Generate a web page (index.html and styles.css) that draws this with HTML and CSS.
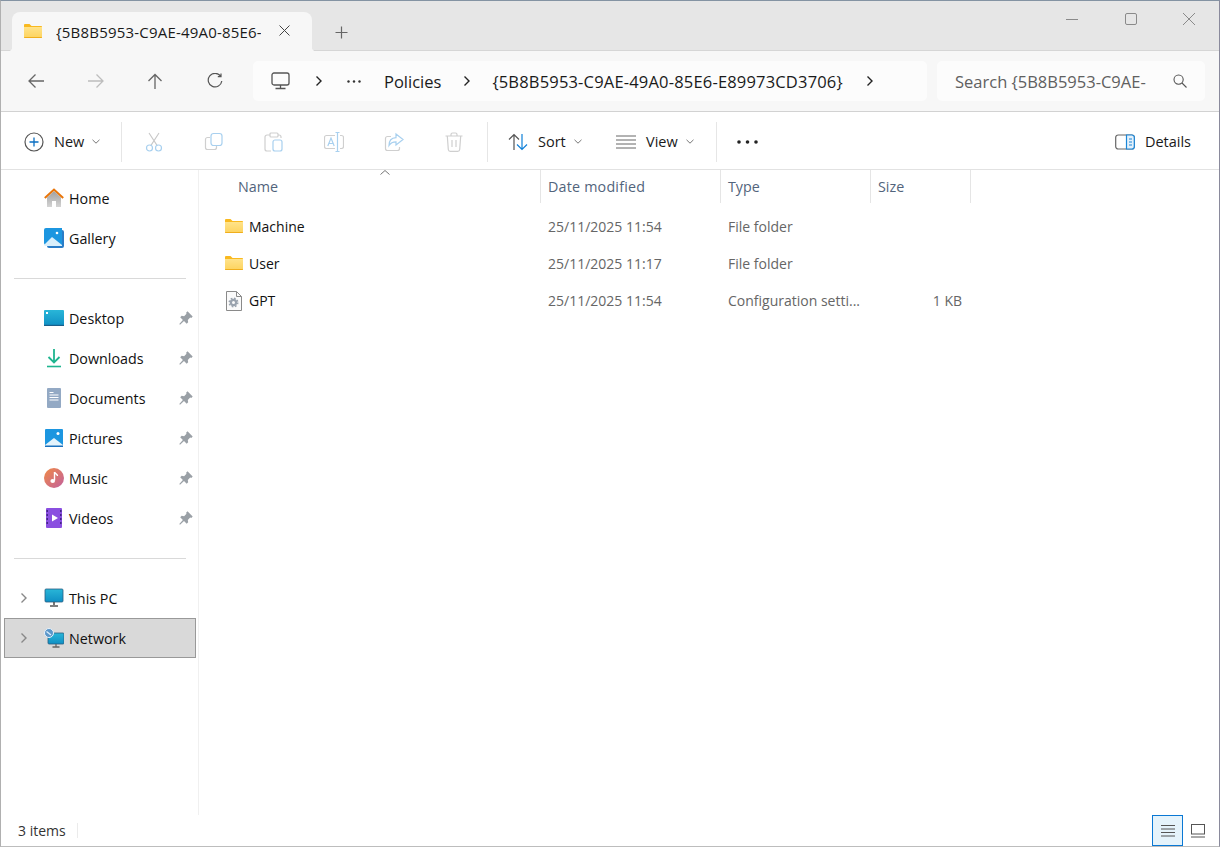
FILE: index.html
```html
<!DOCTYPE html>
<html lang="en">

<head>
    <meta charset="UTF-8">
    <title>File Explorer</title>
    <link rel="stylesheet" href="styles.css">
</head>

<body>
    <svg class="defs" width="0" height="0">
        <defs>
            <linearGradient id="folderFill" x1="0" y1="0" x2="0" y2="1">
                <stop offset="0" stop-color="#ffe38a" />
                <stop offset="1" stop-color="#fdd35e" />
            </linearGradient>
            <linearGradient id="skyFill" x1="0" y1="0" x2="0" y2="1">
                <stop offset="0" stop-color="#29b6d8" />
                <stop offset="1" stop-color="#0f8fc4" />
            </linearGradient>
            <linearGradient id="houseFill" x1="0" y1="0" x2="0" y2="1">
                <stop offset="0" stop-color="#a0a0a0" />
                <stop offset="1" stop-color="#d4d4d4" />
            </linearGradient>
            <linearGradient id="musicFill" x1="0" y1="0" x2="1" y2="1">
                <stop offset="0" stop-color="#f08a45" />
                <stop offset="1" stop-color="#c2609e" />
            </linearGradient>
            <symbol id="folder" viewBox="0 0 18 14">
                <path d="M0 1.2C0 .5.5 0 1.2 0h4.3l2 2H17c.6 0 1 .4 1 1v1H0z" fill="#f9b91f" />
                <path d="M0 3h18v10c0 .6-.4 1-1 1H1c-.6 0-1-.4-1-1z" fill="url(#folderFill)" />
                <path d="M0 13h18v.2c0 .5-.3.8-.8.8H.8c-.5 0-.8-.3-.8-.8z" fill="#f0ae1c" />
            </symbol>
            <symbol id="pin" viewBox="0 0 14 14">
                <path d="M8.500.3L13.700 5.500 12.300 6.900 11.200 6.500 8.800 8.900 9.200 11.300 7.700 12.800 5 10.100 1 13.700.3 13 3.900 9 1.200 6.300 2.700 4.800 5.100 5.200 7.500 2.800 7.100 1.700z" fill="#9aa0a6" />
            </symbol>
            <symbol id="chev" viewBox="0 0 8 12">
                <path d="M1.500 1.500L6 6l-4.500 4.500" fill="none" stroke="currentColor" stroke-width="1.400" />
            </symbol>
            <symbol id="caret" viewBox="0 0 8 5">
                <path d="M.5.8L4 4.200 7.500.8" fill="none" stroke="#777" stroke-width="1" />
            </symbol>
        </defs>
    </svg>

    <div class="window">
        <!-- tabs -->
        <div class="tabbar">
            <div class="tab">
                <svg class="tab-folder" width="18" height="14"><use href="#folder" /></svg>
                <span class="tab-title">{5B8B5953-C9AE-49A0-85E6-E</span>
                <svg class="tab-close" width="11" height="11" viewBox="0 0 11 11"><path d="M.5.5l10 10M10.500.5l-10 10" stroke="#444" stroke-width="1" /></svg>
            </div>
            <svg class="tab-add" width="13" height="13" viewBox="0 0 13 13"><path d="M6.500.5v12M.5 6.500h12" stroke="#666" stroke-width="1.200" /></svg>
            <div class="win-controls">
                <svg width="12" height="12" viewBox="0 0 12 12"><path d="M0 6.500h12" stroke="#8a8a8a" stroke-width="1" /></svg>
                <svg width="12" height="12" viewBox="0 0 12 12"><rect x=".5" y=".5" width="11" height="11" rx="1.500" fill="none" stroke="#8a8a8a" /></svg>
                <svg width="12" height="12" viewBox="0 0 12 12"><path d="M0 0l12 12M12 0L0 12" stroke="#8a8a8a" stroke-width="1" /></svg>
            </div>
        </div>

        <!-- address bar -->
        <div class="addressbar">
            <div class="nav-btns">
                <svg width="18" height="16" viewBox="0 0 18 16"><path d="M17 8H2M8.500 1.500L2 8l6.500 6.500" fill="none" stroke="#666" stroke-width="1.300" /></svg>
                <svg width="18" height="16" viewBox="0 0 18 16"><path d="M1 8h15M9.500 1.500L16 8l-6.500 6.500" fill="none" stroke="#bdbdbd" stroke-width="1.300" /></svg>
                <svg width="18" height="16" viewBox="0 0 18 16"><path d="M9 16V1.500M2.500 8L9 1.500 15.500 8" fill="none" stroke="#666" stroke-width="1.300" /></svg>
                <svg width="18" height="16" viewBox="0 0 18 16"><path d="M14.600 3.200A6.800 6.800 0 1 0 15.800 8M15 .5v3.200h-3.200" fill="none" stroke="#555" stroke-width="1.200" /></svg>
            </div>
            <div class="crumbs">
                <svg class="crumb-pc" width="19" height="18" viewBox="0 0 19 18"><rect x="1" y="1" width="17" height="12" rx="2" fill="none" stroke="#555" stroke-width="1.300" /><path d="M9.500 13v3M4.500 16.500h10" stroke="#555" stroke-width="1.300" /></svg>
                <svg class="crumb-chev first" width="8" height="12"><use href="#chev" /></svg>
                <svg class="crumb-dots" width="14" height="3" viewBox="0 0 14 3"><circle cx="1.500" cy="1.500" r="1.200" fill="#333" /><circle cx="7" cy="1.500" r="1.200" fill="#333" /><circle cx="12.500" cy="1.500" r="1.200" fill="#333" /></svg>
                <span class="crumb-text policies">Policies</span>
                <svg class="crumb-chev" width="8" height="12"><use href="#chev" /></svg>
                <span class="crumb-text guid">{5B8B5953-C9AE-49A0-85E6-E89973CD3706}</span>
                <svg class="crumb-chev last" width="8" height="12"><use href="#chev" /></svg>
            </div>
            <div class="search">
                <span class="search-text">Search {5B8B5953-C9AE-</span>
                <svg width="14" height="14" viewBox="0 0 14 14"><circle cx="5.600" cy="5.600" r="4.600" fill="none" stroke="#555" stroke-width="1.100" /><path d="M9 9l4.500 4.500" stroke="#555" stroke-width="1.100" /></svg>
            </div>
        </div>

        <!-- command bar -->
        <div class="commandbar">
            <div class="cmd cmd-new">
                <svg width="20" height="20" viewBox="0 0 20 20"><circle cx="10" cy="10" r="9" fill="none" stroke="#555" stroke-width="1.200" /><path d="M10 5.500v9M5.500 10h9" stroke="#0a6fc2" stroke-width="1.300" /></svg>
                <span>New</span>
                <svg class="caret" width="8" height="5"><use href="#caret" /></svg>
            </div>
            <div class="cmd-sep"></div>
            <div class="cmd-icons">
                <div class="cmd-icon"><svg width="20" height="20" viewBox="0 0 20 20"><path d="M5 1l8.200 12.600M15 1L6.800 13.600" fill="none" stroke="#c8c8c8" stroke-width="1.100" /><circle cx="5.500" cy="16" r="3" fill="none" stroke="#a8d0ef" stroke-width="1.200" /><circle cx="14.500" cy="16" r="3" fill="none" stroke="#a8d0ef" stroke-width="1.200" /></svg></div>
                <div class="cmd-icon"><svg width="20" height="20" viewBox="0 0 20 20"><path d="M6 5.500H3.500A2 2 0 0 0 1.500 7.500v8a2 2 0 0 0 2 2h7a2 2 0 0 0 2-2V14" fill="none" stroke="#cfcfcf" stroke-width="1.200" /><rect x="7" y="1.500" width="11" height="12" rx="2.500" fill="none" stroke="#a8d0ef" stroke-width="1.200" /></svg></div>
                <div class="cmd-icon"><svg width="20" height="20" viewBox="0 0 20 20"><path d="M6 3H3a2 2 0 0 0-2 2v12a2 2 0 0 0 2 2h4M14 3h1a2 2 0 0 1 2 2v1" fill="none" stroke="#cfcfcf" stroke-width="1.200" /><rect x="6" y="1" width="8" height="4" rx="1" fill="none" stroke="#cfcfcf" stroke-width="1.200" /><rect x="9" y="8" width="9" height="11" rx="2" fill="none" stroke="#a8d0ef" stroke-width="1.200" /></svg></div>
                <div class="cmd-icon wide"><svg width="20" height="20" viewBox="0 0 20 20"><path d="M11 3.500H2.500a2 2 0 0 0-2 2v9a2 2 0 0 0 2 2H11M16 3.500h1.500a2 2 0 0 1 2 2v9a2 2 0 0 1-2 2H16" fill="none" stroke="#cfcfcf" stroke-width="1.200" /><path d="M13.500.5v19M11.500.5h4M11.500 19.500h4M3.800 14L7 6l3.200 8M5 11.500h4" fill="none" stroke="#a8d0ef" stroke-width="1.200" /></svg></div>
                <div class="cmd-icon"><svg width="20" height="20" viewBox="0 0 20 20"><path d="M7 4.500H3.500a2 2 0 0 0-2 2v10a2 2 0 0 0 2 2h10a2 2 0 0 0 2-2V15" fill="none" stroke="#cfcfcf" stroke-width="1.200" /><path d="M12 2l7 5.500-7 5.500V9.800c-3.500 0-5.500 1.200-7 3.700 0-5 2.500-7.500 7-7.800z" fill="none" stroke="#a8d0ef" stroke-width="1.200" /></svg></div>
                <div class="cmd-icon"><svg width="20" height="20" viewBox="0 0 20 20"><path d="M1.500 4h17M7 4V2.500A1.500 1.500 0 0 1 8.500 1h3A1.500 1.500 0 0 1 13 2.500V4M3.300 4l1 13.500a2 2 0 0 0 2 1.800h7.400a2 2 0 0 0 2-1.800l1-13.500M8 8v7M12 8v7" fill="none" stroke="#cfcfcf" stroke-width="1.200" /></svg></div>
            </div>
            <div class="cmd-sep after-icons"></div>
            <div class="cmd cmd-sort">
                <svg width="20" height="18" viewBox="0 0 20 18"><path d="M6 17V1.500M1 6.500l5-5 5 5" fill="none" stroke="#555" stroke-width="1.200" /><path d="M14 1v15.500M9 11.500l5 5 5-5" fill="none" stroke="#1080d8" stroke-width="1.200" /></svg>
                <span>Sort</span>
                <svg class="caret" width="8" height="5"><use href="#caret" /></svg>
            </div>
            <div class="cmd cmd-view">
                <svg width="20" height="14" viewBox="0 0 20 14"><path d="M0 1h20M0 5h20M0 9h20M0 13h20" stroke="#666" stroke-width="1" /></svg>
                <span>View</span>
                <svg class="caret" width="8" height="5"><use href="#caret" /></svg>
            </div>
            <div class="cmd-sep"></div>
            <svg class="cmd-more" width="21" height="4" viewBox="0 0 21 4"><circle cx="2" cy="2" r="1.800" fill="#222" /><circle cx="10.500" cy="2" r="1.800" fill="#222" /><circle cx="19" cy="2" r="1.800" fill="#222" /></svg>
            <div class="cmd cmd-details">
                <svg width="20" height="16" viewBox="0 0 20 16"><rect x=".7" y="1" width="18.600" height="14" rx="2.500" fill="none" stroke="#666" stroke-width="1.200" /><path d="M11.500 1h5.300a2.500 2.500 0 0 1 2.500 2.500v9a2.500 2.500 0 0 1-2.500 2.500h-5.300z" fill="#e4f1fb" stroke="#1a86d8" stroke-width="1.200" /><path d="M14 5h3M14 8h3M14 11h3" stroke="#1a86d8" stroke-width="1.200" /></svg>
                <span>Details</span>
            </div>
        </div>

        <div class="main">
            <!-- left navigation -->
            <div class="sidebar">
                <ul class="nav-list">
                    <li class="nav-item">
                        <span class="chev-slot"></span>
                        <svg class="nav-icon" width="20" height="20" viewBox="0 0 20 20"><path d="M3 9.500L10 3l7 6.500V19h-5v-6H8v6H3z" fill="url(#houseFill)" /><path d="M.8 10L10 1.500 19.200 10" fill="none" stroke="#e8750a" stroke-width="2" /></svg>
                        <span class="nav-label">Home</span>
                    </li>
                    <li class="nav-item">
                        <span class="chev-slot"></span>
                        <svg class="nav-icon" width="20" height="20" viewBox="0 0 20 20"><rect x="3" y="2" width="17" height="18" rx="2" fill="#2a7cc7" /><path d="M0 2a2 2 0 0 1 2-2h16v17H2a2 2 0 0 1-2-2z" fill="#1c96e0" /><path d="M0 17l8-8 10 8v1H2a2 2 0 0 1-2-1z" fill="#d9effb" /><circle cx="13" cy="5" r="1.300" fill="#fff" /></svg>
                        <span class="nav-label">Gallery</span>
                    </li>
                </ul>
                <div class="nav-sep"></div>
                <ul class="nav-list">
                    <li class="nav-item">
                        <span class="chev-slot"></span>
                        <svg class="nav-icon" width="20" height="16" viewBox="0 0 20 16"><rect width="20" height="16" rx="1" fill="url(#skyFill)" /><rect x="2" y="2" width="2" height="2" fill="#fff" /><rect y="14.800" width="20" height="1.200" fill="#1b5f8a" /></svg>
                        <span class="nav-label">Desktop</span>
                        <svg class="pin" width="14" height="14"><use href="#pin" /></svg>
                    </li>
                    <li class="nav-item">
                        <span class="chev-slot"></span>
                        <svg class="nav-icon" width="20" height="20" viewBox="0 0 20 20"><path d="M10 1v13M4.500 9l5.500 5.500L15.500 9" fill="none" stroke="#1fb58f" stroke-width="1.800" /><path d="M3 18.500h14" stroke="#1fb58f" stroke-width="1.600" /></svg>
                        <span class="nav-label">Downloads</span>
                        <svg class="pin" width="14" height="14"><use href="#pin" /></svg>
                    </li>
                    <li class="nav-item">
                        <span class="chev-slot"></span>
                        <svg class="nav-icon" width="20" height="20" viewBox="0 0 20 20"><rect x="3" width="14" height="20" rx="1" fill="#93a9c4" /><path d="M5.500 4.500h4M5.500 7h9M5.500 9.500h9M5.500 12h9" stroke="#fff" stroke-width="1.100" /></svg>
                        <span class="nav-label">Documents</span>
                        <svg class="pin" width="14" height="14"><use href="#pin" /></svg>
                    </li>
                    <li class="nav-item">
                        <span class="chev-slot"></span>
                        <svg class="nav-icon" width="20" height="20" viewBox="0 0 20 20"><rect x="1" y="1" width="18" height="18" rx="1" fill="#1c96e0" /><path d="M1 17l9-7 9 7v1a1 1 0 0 1-1 1H2a1 1 0 0 1-1-1z" fill="#e3f3fc" /><path d="M1 19h18v-1.500H1z" fill="#1a70bd" /><circle cx="14" cy="5.500" r="1.500" fill="#fff" /></svg>
                        <span class="nav-label">Pictures</span>
                        <svg class="pin" width="14" height="14"><use href="#pin" /></svg>
                    </li>
                    <li class="nav-item">
                        <span class="chev-slot"></span>
                        <svg class="nav-icon" width="20" height="20" viewBox="0 0 20 20"><circle cx="10" cy="10" r="10" fill="url(#musicFill)" /><path d="M10.500 4v8.500" stroke="#fff" stroke-width="1.400" /><ellipse cx="8.700" cy="13" rx="2.300" ry="1.900" fill="#fff" /><path d="M10.500 4c.5 2 3 2 3 4" fill="none" stroke="#fff" stroke-width="1.400" /></svg>
                        <span class="nav-label">Music</span>
                        <svg class="pin" width="14" height="14"><use href="#pin" /></svg>
                    </li>
                    <li class="nav-item">
                        <span class="chev-slot"></span>
                        <svg class="nav-icon" width="20" height="20" viewBox="0 0 20 20"><rect x="2" width="16" height="20" rx="1" fill="#8a4fe0" /><path d="M8 6.500l6 3.500-6 3.500z" fill="#fff" /><path d="M3.200 2v16M16.800 2v16" stroke="#3c2080" stroke-width="1.400" stroke-dasharray="2 2" /></svg>
                        <span class="nav-label">Videos</span>
                        <svg class="pin" width="14" height="14"><use href="#pin" /></svg>
                    </li>
                </ul>
                <div class="nav-sep"></div>
                <ul class="nav-list">
                    <li class="nav-item">
                        <span class="chev-slot"><svg width="8" height="12"><use href="#chev" /></svg></span>
                        <svg class="nav-icon" width="20" height="20" viewBox="0 0 20 20"><rect x="1" y="1" width="18" height="13" rx="1" fill="url(#skyFill)" stroke="#2a5d80" stroke-width=".8" /><path d="M10 14v3M6 18h8" stroke="#555" stroke-width="1.600" /></svg>
                        <span class="nav-label">This PC</span>
                    </li>
                    <li class="nav-item selected">
                        <span class="chev-slot"><svg width="8" height="12"><use href="#chev" /></svg></span>
                        <svg class="nav-icon" width="20" height="20" viewBox="0 0 20 20"><rect x="4" y="5" width="16" height="11" rx="1" fill="url(#skyFill)" stroke="#2a5d80" stroke-width=".8" /><path d="M12 16v2.500M8.500 19h7" stroke="#666" stroke-width="1.300" /><circle cx="5" cy="5" r="4.500" fill="#5b96c9" stroke="#e8f2fa" stroke-width="1" /><path d="M2.500 3.500L7 7" stroke="#d8ecfa" stroke-width="1.500" /></svg>
                        <span class="nav-label">Network</span>
                    </li>
                </ul>
            </div>

            <!-- file list -->
            <div class="files">
                <svg class="sort-arrow" width="10" height="5" viewBox="0 0 10 5"><path d="M.5 4.500L5 .5l4.500 4" fill="none" stroke="#777" /></svg>
                <div class="file-head">
                    <div class="col-name head-cell">Name</div>
                    <div class="col-date head-cell">Date modified</div>
                    <div class="col-type head-cell">Type</div>
                    <div class="col-size head-cell">Size</div>
                </div>
                <div class="file-row">
                    <div class="col-name file-name">
                        <svg class="row-folder" width="18" height="14"><use href="#folder" /></svg>
                        <span>Machine</span>
                    </div>
                    <div class="col-date">25/11/2025 11:54</div>
                    <div class="col-type">File folder</div>
                    <div class="col-size"></div>
                </div>
                <div class="file-row">
                    <div class="col-name file-name">
                        <svg class="row-folder" width="18" height="14"><use href="#folder" /></svg>
                        <span>User</span>
                    </div>
                    <div class="col-date">25/11/2025 11:17</div>
                    <div class="col-type">File folder</div>
                    <div class="col-size"></div>
                </div>
                <div class="file-row">
                    <div class="col-name file-name">
                        <svg width="18" height="20" viewBox="0 0 18 20"><path d="M1.500.5h10l5 5v14h-15z" fill="#fafafa" stroke="#8a8a8a" /><path d="M11.500.5v5h5" fill="none" stroke="#8a8a8a" /><circle cx="8.500" cy="11.500" r="2.600" fill="none" stroke="#9aa3ae" stroke-width="2.200" /><circle cx="8.500" cy="11.500" r="4.300" fill="none" stroke="#9aa3ae" stroke-width="1.400" stroke-dasharray="1.700 1.680" /></svg>
                        <span>GPT</span>
                    </div>
                    <div class="col-date">25/11/2025 11:54</div>
                    <div class="col-type">Configuration setti...</div>
                    <div class="col-size">1 KB</div>
                </div>
            </div>
        </div>

        <!-- status bar -->
        <div class="statusbar">
            <span class="status-text">3 items</span>
            <div class="status-sep"></div>
            <div class="view-btn active">
                <svg width="14" height="12" viewBox="0 0 14 12"><path d="M0 .5h14M0 4h14M0 7.500h14M0 11h14" stroke="#555" stroke-width="1" /></svg>
            </div>
            <div class="view-btn preview">
                <svg width="14" height="14" viewBox="0 0 14 14"><rect x=".5" y=".5" width="13" height="9.500" fill="none" stroke="#555" /><path d="M0 13h14" stroke="#555" /></svg>
            </div>
        </div>
    </div>
</body>

</html>
```

FILE: styles.css
```css
* {
    margin: 0;
    padding: 0;
    box-sizing: border-box;
}

li {
    list-style: none;
}

svg {
    display: block;
    flex-shrink: 0;
}

.defs {
    position: absolute;
}

html,
body {
    width: 1220px;
    height: 847px;
    overflow: hidden;
}

body {
    font-family: "Open Sans", "Noto Sans", "Liberation Sans", sans-serif;
    font-size: 14px;
    color: #1a1a1a;
    background: #fff;
}

.window {
    width: 1220px;
    height: 847px;
    display: flex;
    flex-direction: column;
    border-top: 1px solid #8493a3;
    border-left: 1px solid #b0b0b0;
    border-right: 1px solid #8a8a9c;
    border-bottom: 1px solid #bdbdbd;
}

/* tabs */
.tabbar {
    height: 50px;
    flex-shrink: 0;
    display: flex;
    align-items: flex-start;
    background: #e6e6e6;
    border-bottom: 1px solid #d6d6d6;
    padding-left: 11px;
}

.tab {
    width: 300px;
    height: 39px;
    margin-top: 11px;
    display: flex;
    align-items: center;
    background: #f7f7f7;
    border-radius: 8px 8px 0 0;
    padding: 0 22px 0 12px;
    position: relative;
}

.tab::before,
.tab::after {
    content: "";
    position: absolute;
    bottom: 0;
    width: 4px;
    height: 4px;
}

.tab::before {
    left: -4px;
    background: radial-gradient(circle at 0 0, transparent 4px, #f7f7f7 4.5px);
}

.tab::after {
    right: -4px;
    background: radial-gradient(circle at 100% 0, transparent 4px, #f7f7f7 4.5px);
}

.tab-folder {
    margin-top: -2px;
}

.tab-title {
    width: 206px;
    margin-left: 14px;
    overflow: hidden;
    white-space: nowrap;
    font-size: 15px;
    color: #1a1a1a;
    letter-spacing: 0.2px;
}

.tab-close {
    margin-left: 18px;
    margin-top: -2px;
}

.tab-add {
    margin: 25px 0 0 23px;
}

.win-controls {
    margin-left: auto;
    margin-top: 12px;
    width: 153px;
    padding-right: 24px;
    display: flex;
    justify-content: space-between;
}

/* address bar */
.addressbar {
    height: 61px;
    flex-shrink: 0;
    display: flex;
    align-items: center;
    background: #f7f7f7;
    border-bottom: 1px solid #d2d2d2;
    padding-right: 14px;
}

.nav-btns {
    width: 252px;
    padding: 0 29px 0 26px;
    display: flex;
    justify-content: space-between;
}

.crumbs {
    width: 674px;
    height: 40px;
    display: flex;
    align-items: center;
    background: #fcfcfc;
    border-radius: 5px;
    padding-left: 18px;
    color: #222;
}

.crumb-chev.first {
    margin-left: 25px;
}

.crumb-dots {
    margin-left: 24px;
}

.crumb-text {
    font-size: 16.5px;
    color: #1a1a1a;
    white-space: nowrap;
}

.policies {
    margin-left: 23px;
    margin-right: 22px;
}

.guid {
    margin-left: 21px;
    width: 350px;
    letter-spacing: 0.18px;
}

.crumb-chev.last {
    margin-left: 24px;
}

.search {
    width: 268px;
    height: 40px;
    margin-left: 10px;
    display: flex;
    align-items: center;
    background: #fcfcfc;
    border-radius: 5px;
    padding-left: 18px;
}

.search-text {
    width: 192px;
    white-space: nowrap;
    font-size: 16.5px;
    color: #606060;
}

.search svg {
    margin-left: 26px;
}

/* command bar */
.commandbar {
    height: 58px;
    flex-shrink: 0;
    display: flex;
    align-items: center;
    padding: 2px 0 0 23px;
    border-bottom: 1px solid #e2e2e2;
    background: #fff;
}

.cmd {
    display: flex;
    align-items: center;
    font-size: 14.5px;
    color: #1a1a1a;
}

.cmd .caret {
    margin-left: 8px;
}

.cmd-new {
    width: 97px;
}

.cmd-new span {
    margin-left: 10px;
}

.cmd-sep {
    width: 1px;
    height: 40px;
    background: #e6e6e6;
}

.cmd-icons {
    display: flex;
    margin-left: 2px;
}

.cmd-icon {
    width: 60px;
    display: flex;
    justify-content: center;
}

.cmd-sep.after-icons {
    margin-left: 3px;
}

.cmd-sort {
    width: 128px;
    padding-left: 20px;
}

.cmd-sort span,
.cmd-view span,
.cmd-details span {
    margin-left: 10px;
}

.cmd-view {
    width: 100px;
}

.cmd-more {
    margin-left: 20px;
}

.cmd-details {
    margin-left: auto;
    padding-right: 28px;
}

/* main area */
.main {
    flex: 1;
    display: flex;
    min-height: 0;
}

.sidebar {
    width: 198px;
    flex-shrink: 0;
    padding-top: 8px;
    border-right: 1px solid #f0f0f0;
}

.nav-item {
    height: 40px;
    margin: 0 2px 0 3px;
    display: flex;
    align-items: center;
    padding-left: 15px;
    border: 1px solid transparent;
    font-size: 14.3px;
    color: #111;
}

.nav-item.selected {
    background: #d9d9d9;
    border-color: #999;
}

.chev-slot {
    width: 24px;
    color: #888;
}

.nav-label {
    margin-left: 5px;
    flex: 1;
}

.pin {
    margin-right: 2px;
}

.nav-sep {
    height: 1px;
    margin: 20px 12px 19px 13px;
    background: #d9d9d9;
}

/* file list */
.files {
    flex: 1;
    position: relative;
}

.sort-arrow {
    position: absolute;
    left: 181px;
    top: 0;
}

.file-head,
.file-row {
    display: flex;
}

.file-head {
    height: 33px;
    margin-bottom: 5px;
}

.file-row {
    height: 37px;
    align-items: center;
    color: #666;
}

.col-name {
    width: 342px;
}

.col-date {
    width: 180px;
    padding-left: 7px;
}

.col-type {
    width: 150px;
    padding-left: 7px;
    white-space: nowrap;
}

.col-size {
    width: 100px;
    padding-left: 7px;
    text-align: right;
    padding-right: 9px;
}

.head-cell {
    border-right: 1px solid #e5e5e5;
    line-height: 33px;
    font-size: 14.3px;
    color: #52647c;
}

.head-cell.col-name {
    padding-left: 39px;
}

.head-cell.col-date {
    letter-spacing: 0.2px;
}

.head-cell.col-size {
    text-align: left;
}

.file-name {
    display: flex;
    align-items: center;
    padding-left: 26px;
    color: #111;
}

.file-name span {
    margin-left: 6px;
}

.row-folder {
    margin-top: -2px;
}

/* status bar */
.statusbar {
    height: 31px;
    flex-shrink: 0;
    display: flex;
    align-items: center;
    padding-left: 17px;
    padding-right: 14px;
}

.status-text {
    color: #333;
}

.status-sep {
    width: 1px;
    height: 15px;
    margin-left: 11px;
    margin-right: auto;
    background: #ebebeb;
}

.view-btn {
    width: 31px;
    height: 31px;
    display: flex;
    align-items: center;
    justify-content: center;
}

.view-btn.preview {
    width: 22px;
    justify-content: flex-end;
}

.view-btn.active {
    background: #e5f3fb;
    border: 1px solid #0a78d4;
}
```
